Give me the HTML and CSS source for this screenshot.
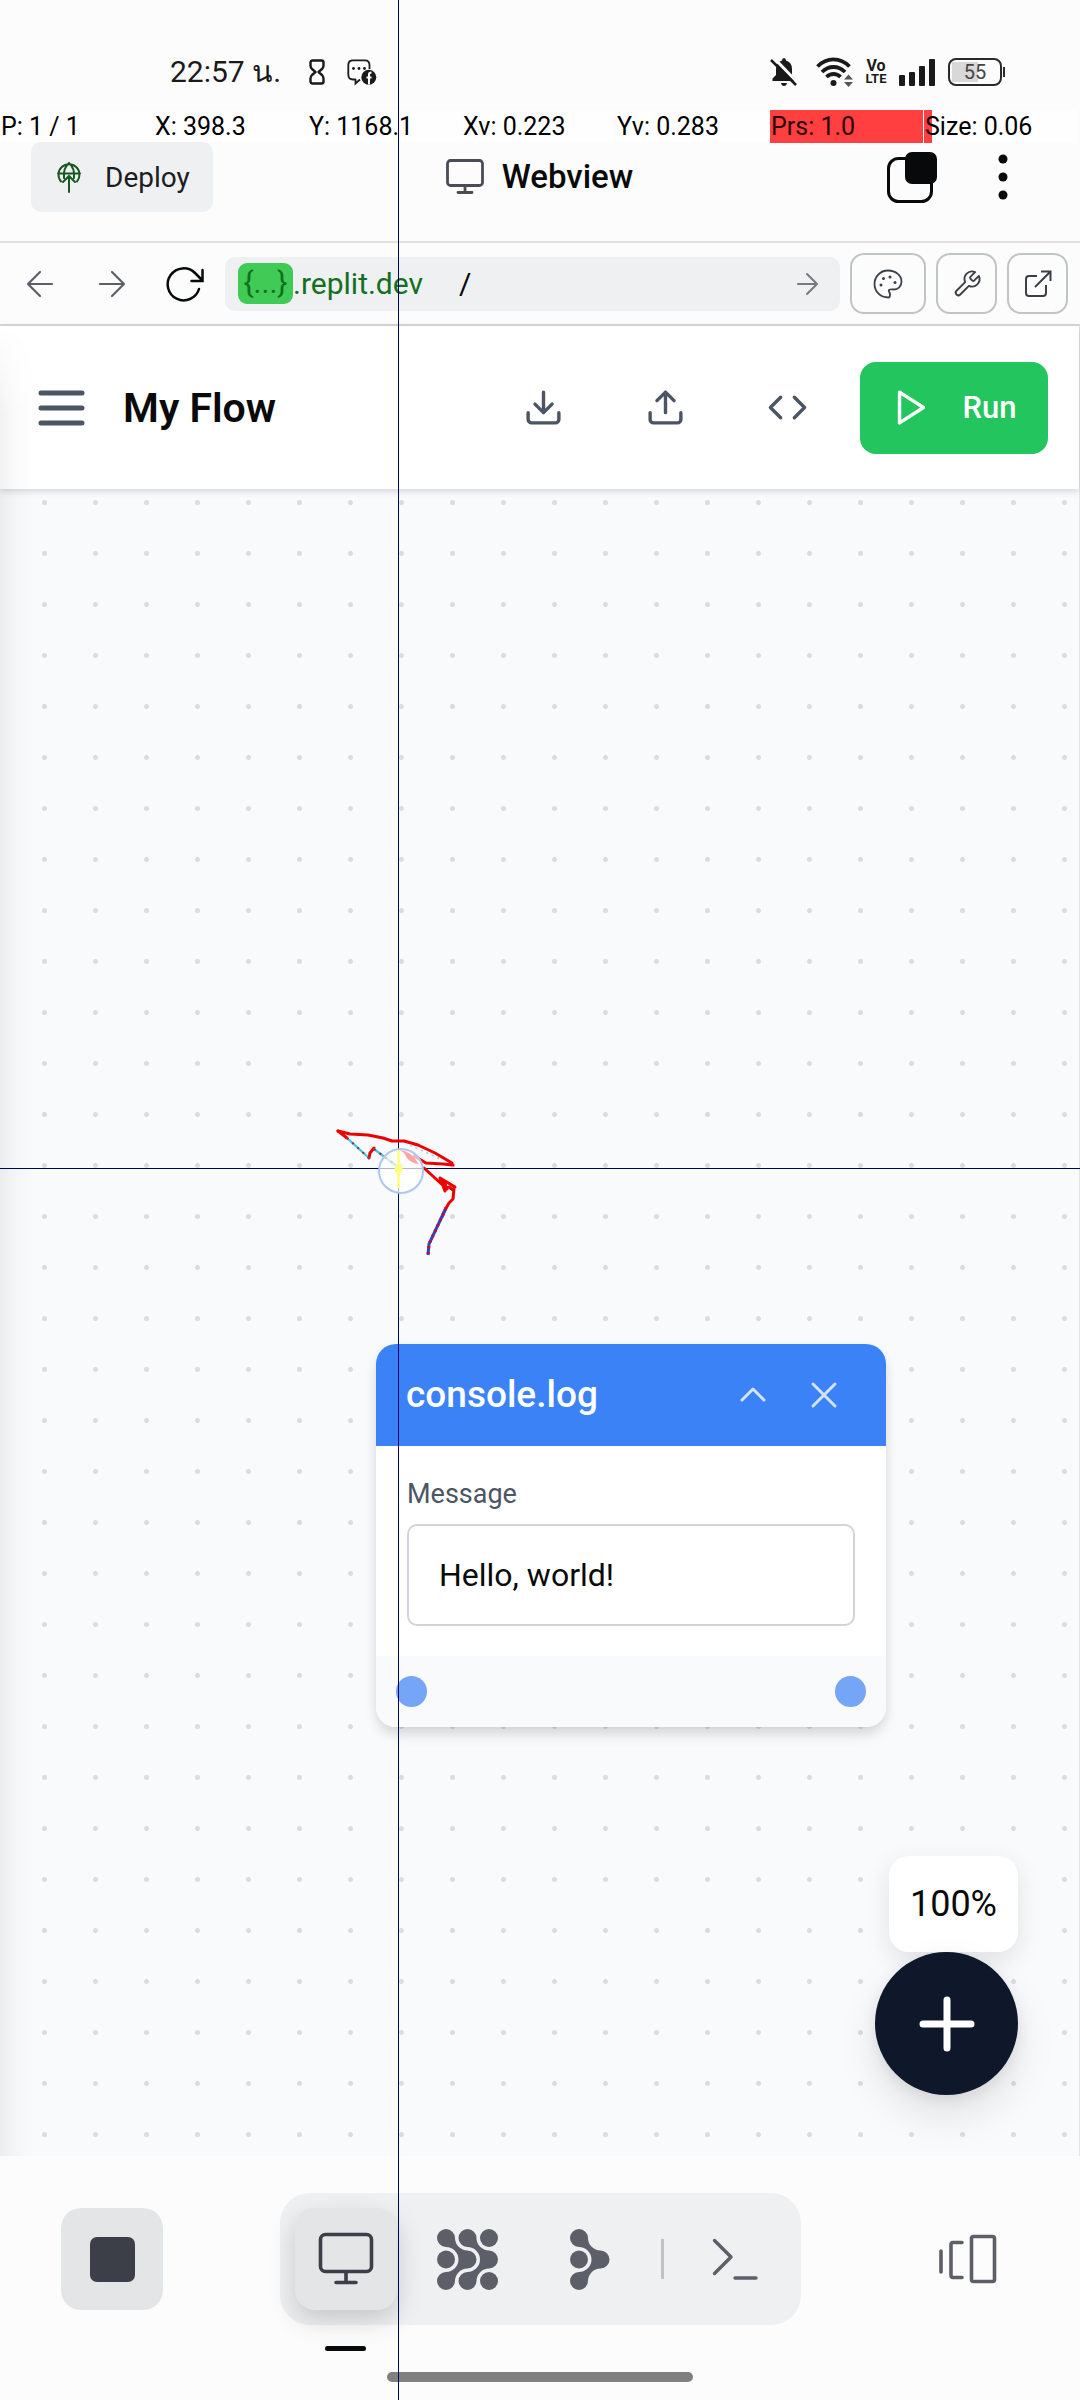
FILE: index.html
```html
<!DOCTYPE html>
<html lang="th">
<head>
<meta charset="utf-8">
<meta name="viewport" content="width=device-width, initial-scale=1">
<title>My Flow</title>
<link rel="stylesheet" href="styles.css">
</head>
<body>
<div class="screen">

  <div class="status">
    <span class="clock">22:57 น.</span>
    <svg class="hourglass" width="16" height="26" viewBox="0 0 16 26" fill="none" stroke="#1a1a1a" stroke-width="2.400" stroke-linejoin="round"><path d="M3.500 1.500h9q2 0 2 2v3q0 2-1.500 3.500L9.500 13l3.500 3q1.500 1.500 1.500 3.500v3q0 2-2 2h-9q-2 0-2-2v-3q0-2 1.500-3.500L6.500 13 3 10Q1.500 8.500 1.500 6.500v-3q0-2 2-2z"/></svg>
    <svg width="30" height="26" viewBox="0 0 30 26"><path d="M9 20.500H6Q1.300 20.500 1.300 16V6Q1.300 1.300 6 1.300H18Q22.500 1.300 22.500 6V10M13 20.500 8.500 24.500V20" fill="none" stroke="#1a1a1a" stroke-width="1.800"/><g fill="#1a1a1a"><circle cx="6.500" cy="9.500" r="1.400"/><circle cx="12" cy="9.500" r="1.400"/><circle cx="17.500" cy="9.500" r="1.400"/><circle cx="21.800" cy="18.300" r="7.500"/></g><path d="M22 25.500V15.500q0-2 2.500-2M19.500 18.500h5" fill="none" stroke="#fcfcfc" stroke-width="2"/></svg>
    <span class="grow"></span>
    <svg width="28" height="28" viewBox="0 0 28 28"><path d="M14 0q2 0 2 2.500 6 1.800 6 8.500v6l3.500 3.500V23H2.500v-2.500L6 17v-6q0-6.500 6-8.500Q12 0 14 0zM11 25h6q-.5 3-3 3t-3-3z" fill="#1a1a1a"/><path d="M3 -1 29 26" stroke="#fcfcfc" stroke-width="3"/><path d="M1 2 26 27" stroke="#1a1a1a" stroke-width="2.500"/></svg>
    <svg class="wifi" width="38" height="30" viewBox="0 0 38 30"><g fill="none" stroke="#1a1a1a" stroke-width="3.800"><path d="M1.500 9.500Q8.500 2.400 17.500 2.400t16 7.100"/><path d="M6 15q5-5 11.500-5T29 15"/><path d="M10.500 20q3-3 7-3t7 3"/></g><circle cx="17.500" cy="26" r="3" fill="#1a1a1a"/><path d="M28 22.500l4.500-5 4.500 5zM28 25h9l-4.500 5z" fill="#555"/></svg>
    <span class="volte"><span>Vo</span><span>LTE</span></span>
    <svg class="signal" width="38" height="27" viewBox="0 0 38 27" fill="#1a1a1a"><rect x="1" y="16" width="6" height="11" rx="1"/><rect x="11" y="13" width="6" height="14" rx="1"/><rect x="21" y="7" width="6" height="20" rx="1"/><rect x="31" y="0" width="6" height="27" rx="1"/></svg>
    <span class="battery">55</span>
  </div>

  <div class="pointer-data">
    <span>P: 1 / 1</span><span>X: 398.3</span><span>Y: 1168.1</span><span>Xv: 0.223</span><span>Yv: 0.283</span><span class="full">Prs: 1.0</span><span class="part">Size: 0.06</span>
  </div>

  <header class="tabbar">
    <button class="deploy">
      <svg width="24" height="32" viewBox="0 0 24 32" fill="none" stroke="#17591f" stroke-width="2" stroke-linecap="round"><path d="M4 20.500A10.500 10.500 0 1 1 20 20.500M1 12.500h22M7 17Q6 7 12 2q6 5 5 15M12 31V16M6 21l6-6 6 6"/></svg>
      Deploy
    </button>
    <div class="tab-title">
      <svg width="38" height="36" viewBox="0 0 38 36" fill="none" stroke="#4b4d56" stroke-width="2.800" stroke-linecap="round"><rect x="1.500" y="1.500" width="35" height="25" rx="3"/><path d="M19 27v6M12 33.500h14"/></svg>
      Webview
    </div>
    <div class="tab-actions">
      <button class="plain" aria-label="Tabs"><svg width="52" height="52" viewBox="0 0 52 52"><rect x="2.500" y="7.500" width="43" height="43" rx="10" fill="none" stroke="#07090b" stroke-width="3"/><rect x="19" y="1" width="32" height="32" rx="7" fill="#07090b"/></svg></button>
      <button class="plain" aria-label="More"><svg width="10" height="46" viewBox="0 0 10 46" fill="#07090b"><circle cx="5" cy="5" r="4.500"/><circle cx="5" cy="23" r="4.500"/><circle cx="5" cy="41" r="4.500"/></svg></button>
    </div>
  </header>

  <nav class="urlbar">
    <div class="history">
      <button class="plain" aria-label="Back"><svg width="28" height="28" viewBox="0 0 28 28" fill="none" stroke="#5d5f68" stroke-width="2.200" stroke-linecap="round" stroke-linejoin="round"><path d="M26 14H2M14 2 2 14l12 12"/></svg></button>
      <button class="plain" aria-label="Forward"><svg width="28" height="28" viewBox="0 0 28 28" fill="none" stroke="#5d5f68" stroke-width="2.200" stroke-linecap="round" stroke-linejoin="round"><path d="M2 14h24M14 2l12 12-12 12"/></svg></button>
      <button class="plain" aria-label="Reload"><svg width="38" height="36" viewBox="0 0 38 36" fill="none" stroke="#07090b" stroke-width="2.500" stroke-linecap="round"><path d="M33 23A16 16 0 1 1 29 7l7 7M36.500 4v11h-11"/></svg></button>
    </div>
    <div class="address">
      <span class="chip">{...}</span><span class="domain">.replit.dev</span><span class="path">/</span>
      <span class="grow"></span>
      <button class="plain" aria-label="Go"><svg width="22" height="22" viewBox="0 0 22 22" fill="none" stroke="#777980" stroke-width="2" stroke-linecap="round" stroke-linejoin="round"><path d="M2 11h18M11 1l10 10-10 10"/></svg></button>
    </div>
    <button class="tool wide" aria-label="Theme"><svg width="30" height="30" viewBox="0 0 30 30" fill="none" stroke="#3c3f48" stroke-width="1.800"><path d="M15.500 28.500C7 28.500 1.500 22 1.500 15S7 1.500 15 1.500 28.500 7 28.500 12.500c0 5-3.500 8-7.500 8-3 0-5-.5-5.200.8-.2 1.200 1.200 2.200 1.200 4.200 0 1.500-.5 3-1.500 3z"/><g fill="#3c3f48" stroke="none"><circle cx="8" cy="16" r="1.500"/><circle cx="10.500" cy="9.500" r="1.500"/><circle cx="17" cy="8" r="1.500"/><circle cx="22" cy="13.500" r="1.500"/></g></svg></button>
    <button class="tool" aria-label="Developer tools"><svg width="30" height="30" viewBox="0 0 24 24" fill="none" stroke="#3c3f48" stroke-width="1.500" stroke-linejoin="round"><path d="M14.700 6.300a1 1 0 0 0 0 1.400l1.600 1.600a1 1 0 0 0 1.400 0l3.770-3.770a6 6 0 0 1-7.940 7.940l-6.910 6.910a2.120 2.120 0 0 1-3-3l6.910-6.910a6 6 0 0 1 7.940-7.940l-3.760 3.760z"/></svg></button>
    <button class="tool" aria-label="Open in new tab"><svg width="28" height="28" viewBox="0 0 28 28" fill="none" stroke="#3c3f48" stroke-width="2"><path d="M13 6H5Q2 6 2 9v14q0 3 3 3h14q3 0 3-3v-8M11 17 26 2M17 1.500h9.500V11"/></svg></button>
  </nav>

  <main class="webview">
    <div class="appbar">
      <button class="plain" aria-label="Menu"><svg width="48" height="38" viewBox="0 0 48 38" stroke="#4b5563" stroke-width="5" stroke-linecap="round"><path d="M4 4h41M4 19h41M4 34h41"/></svg></button>
      <h1>My Flow</h1>
      <button class="icon-button" aria-label="Import"><svg width="41" height="41" viewBox="0 0 24 24"><path d="M21 15v4a2 2 0 0 1-2 2H5a2 2 0 0 1-2-2v-4M7 10l5 5 5-5M12 15V3"/></svg></button>
      <button class="icon-button" aria-label="Export"><svg width="41" height="41" viewBox="0 0 24 24"><path d="M21 15v4a2 2 0 0 1-2 2H5a2 2 0 0 1-2-2v-4M17 8l-5-5-5 5M12 3v12"/></svg></button>
      <button class="icon-button" aria-label="Code"><svg width="41" height="41" viewBox="0 0 24 24"><path d="M16 18l6-6-6-6M8 6l-6 6 6 6"/></svg></button>
      <button class="run"><svg width="41" height="41" viewBox="0 0 24 24"><path d="M5 3l14 9-14 9z"/></svg>Run</button>
    </div>

    <div class="canvas">
      <section class="node">
        <header class="node-head">
          <h2>console.log</h2>
          <button class="plain" aria-label="Collapse"><svg width="26" height="26" viewBox="0 0 26 26"><path d="M2 18 13 7l11 11"/></svg></button>
          <button class="plain" aria-label="Remove"><svg width="26" height="26" viewBox="0 0 26 26"><path d="M2 2l22 22M24 2 2 24"/></svg></button>
        </header>
        <div class="node-body">
          <label for="message">Message</label>
          <input id="message" type="text" value="Hello, world!">
        </div>
        <footer class="node-ports"><span class="port"></span><span class="port"></span></footer>
      </section>
      <div class="corner">
        <span class="zoom">100%</span>
        <button class="add" aria-label="Add node"><svg width="56" height="56" viewBox="0 0 56 56" stroke="#fff" stroke-width="7" stroke-linecap="round"><path d="M28 4v48M4 28h48"/></svg></button>
      </div>
    </div>
  </main>

  <footer class="dock">
    <button class="dock-button filled" aria-label="Stop"><span class="stop"></span></button>
    <div class="switcher">
      <button class="dock-button filled active" aria-label="Webview"><svg width="56" height="54" viewBox="0 0 56 54" fill="none" stroke="#3c3f48" stroke-width="3.600" stroke-linecap="round"><rect x="2.500" y="2.500" width="51" height="37" rx="5"/><path d="M28 40v9M18 50.500h20"/></svg></button>
      <button class="dock-button" aria-label="Assistant"><svg width="61" height="61" viewBox="0 0 61 61" fill="#5d5f68"><path id="branch" d="M18 9A12.500 12.500 0 0 0 30.500 21.500A9 9 0 0 1 30.500 39.500A12.500 12.500 0 0 0 18 52A9 9 0 1 1 9 43A12.500 12.500 0 0 0 9 18A9 9 0 1 1 18 9z"/><use href="#branch" x="21.500"/><circle cx="9" cy="30.500" r="9"/><circle cx="52" cy="9" r="9"/><circle cx="52" cy="52" r="9"/></svg></button>
      <button class="dock-button" aria-label="Agent"><svg width="40" height="61" viewBox="0 0 40 61" fill="#5d5f68"><use href="#branch"/><circle cx="9" cy="30.500" r="9"/></svg></button>
      <span class="divider"></span>
      <button class="dock-button" aria-label="Shell"><svg width="46" height="42" viewBox="0 0 46 42" fill="none" stroke="#5d5f68" stroke-width="3.400" stroke-linecap="round" stroke-linejoin="round"><path d="M2.500 2.500 19 19 2.500 35.500M23 40h21"/></svg></button>
    </div>
    <button class="dock-button" aria-label="All tabs"><svg width="58" height="50" viewBox="0 0 58 50" fill="none" stroke="#5d5f68" stroke-width="3.600" stroke-linecap="round"><rect x="32.500" y="2.500" width="23" height="45" rx="2"/><path d="M23 8.500H14Q12 8.500 12 10.500V41Q12 43.500 14 43.500H23M2 17v21"/></svg></button>
  </footer>
  <div class="marker-row"><span class="marker"></span></div>
  <div class="home-row"><span class="home"></span></div>

  <div class="guide-v"></div>
  <div class="guide-h"></div>
  <svg class="trail" width="160" height="160" viewBox="0 0 160 160" fill="none">
    <g stroke="#ec0000" stroke-width="3" stroke-linejoin="round" stroke-linecap="round">
      <path d="M18 21 30 24l18 1 15 3 9 3 12 0 14 4 17 8 17 10"/><path d="M18 21l9 7M133 55l-10-1-17-1-12-7"/>
      <path d="M104 58 127 79M120 68l15 9M134 78l-1 11-4 4-4 7-3 7M120 68l5 13M124 71l3 8M129 77l4 3"/>
      <path d="M49 48l1-5 4-5"/>
    </g>
    <path d="M27 28 49 48M54 39 78 57" stroke="#38c8e8" stroke-width="2.200"/>
    <path d="M27 28 49 48M54 39 78 57" stroke="#b21c28" stroke-width="2" stroke-dasharray="2 5"/>
    <path d="M90 35 120 49" stroke="#b8c8c8" stroke-width="1.600" stroke-dasharray="2 4"/>
    <path d="M126 98 109 134l-1 11" stroke="#2b45c8" stroke-width="3"/>
    <path d="M126 98 109 134l-1 11" stroke="#e00014" stroke-width="3" stroke-dasharray="2 4"/>
    <circle cx="81" cy="61" r="22" fill="#fff" fill-opacity=".7" stroke="#afc6f2" stroke-width="2"/>
    <path d="M80 40q11 1 19 14-10 0-15-11" fill="#ffa4a4"/>
    <path d="M78.500 40v38" stroke="#ffff8c" stroke-width="3"/><circle cx="78.500" cy="59" r="4" fill="#ffff78"/>
  </svg>
</div>
</body>
</html>
```
FILE: styles.css
```css
* { box-sizing: border-box; }
body { margin: 0; background: #fcfcfc; color: #0a0a0a; font-family: Roboto, "Noto Sans", sans-serif; }
svg { display: block; flex: none; overflow: visible; }
button { border: 0; padding: 0; background: none; color: inherit; font: inherit; display: flex; align-items: center; justify-content: center; flex: none; }
h1, h2 { margin: 0; }
.grow { flex: 1; }
.screen { position: relative; min-height: 100vh; display: flex; flex-direction: column; overflow: hidden; }

.status { display: flex; align-items: center; height: 110px; padding: 34px 78px 0 170px; color: #1a1a1a; }
.clock { font-size: 30px; line-height: 36px; margin-right: 28px; }
.hourglass { margin-right: 22px; }
.wifi { margin-left: 18px; }
.volte { display: flex; flex-direction: column; align-items: center; width: 20px; margin: 0 12px; font: bold 16px/13px "Liberation Sans Narrow", Roboto, sans-serif; }
.volte span:last-child { font-size: 13px; }
.signal { margin-right: 12px; }
.battery { position: relative; width: 54px; height: 28px; border: 2px solid #2a2a2a; border-radius: 8px; text-align: center; font-size: 20px; line-height: 24px; color: #444; background: linear-gradient(90deg, #d8d8d8 26px, transparent 26px) 2px 2px / 46px 20px no-repeat; }
.battery::after { content: ""; position: absolute; right: -5px; top: 7px; width: 2px; height: 10px; background: #2a2a2a; }

.pointer-data { display: grid; grid-template-columns: repeat(7, 1fr); column-gap: 1px; height: 32px; padding-right: 3px; font-size: 25px; line-height: 33px; color: #000; }
.pointer-data span { padding-left: 1px; background: #fefefe; white-space: nowrap; }
.pointer-data .full { background: #ff3f40; color: #2a0505; }
.pointer-data .part { background: linear-gradient(90deg, #ff3f40 8px, #fefefe 8px); }

.tabbar { display: grid; grid-template-columns: 1fr auto 1fr; align-items: center; padding: 0 72px 32px 31px; height: 101px; border-bottom: 2px solid #e0e0e0; }
.deploy { justify-self: start; height: 70px; padding: 0 23px 0 26px; gap: 24px; border-radius: 10px; background: #eff0f2; font-size: 28px; color: #1b1d22; }
.tab-title { display: flex; align-items: center; gap: 18px; font-size: 33px; font-weight: 500; line-height: 40px; margin-left: 40px; }
.tab-actions { display: flex; justify-content: flex-end; align-items: center; gap: 60px; }

.urlbar { display: flex; align-items: center; gap: 10px; height: 83px; padding: 0 12px 0 26px; border-bottom: 2px solid #d8dada; }
.history { display: flex; align-items: center; gap: 44px; margin-right: 11px; }
.history button:last-child { margin-left: -4px; }
.address { flex: 1; display: flex; align-items: center; height: 54px; padding: 0 22px 0 13px; border-radius: 10px; background: #eff0f2; font-size: 30px; line-height: 40px; color: #127020; }
.chip { width: 55px; height: 41px; border-radius: 9px; background: #3fcb55; text-align: center; }
.path { margin-left: 36px; color: #07090b; }
.tool { width: 61px; height: 61px; border: 2px solid #c0c4c4; border-radius: 14px; }
.wide { width: 76px; }

.webview { position: relative; flex: 1; display: flex; flex-direction: column; border-right: 1px solid #e4e4e4; }
.webview::before { content: ""; position: absolute; z-index: 2; inset: 0 auto 0 0; width: 34px; pointer-events: none; background: linear-gradient(90deg, rgba(0,0,0,.05), rgba(0,0,0,.015) 50%, transparent); -webkit-mask-image: linear-gradient(transparent, #000 90px); mask-image: linear-gradient(transparent, #000 90px); }
.appbar { position: relative; z-index: 1; display: flex; align-items: center; height: 163px; padding: 0 31px 0 37px; background: #fff; box-shadow: 0 2px 7px rgba(0,0,0,.16); }
.appbar h1 { flex: 1; margin-left: 38px; font-size: 41px; line-height: 48px; font-weight: 600; }
.icon-button { width: 102px; height: 92px; margin-right: 20px; }
.icon-button svg, .run svg { fill: none; stroke: #4b5563; stroke-width: 2; stroke-linecap: round; stroke-linejoin: round; }
.run { width: 188px; height: 92px; gap: 30px; margin-left: 2px; border-radius: 16px; background: #22c55e; color: #fff; font-size: 31px; font-weight: 500; }
.run svg { stroke: #fff; }

.canvas { position: relative; flex: 1; border-radius: 0 0 0 8px; background: #f8fafc radial-gradient(circle at center, #dcdcdc 2px, transparent 3px) 19px -12px / 51px 51px; }
.node { position: absolute; left: 376px; top: 855px; width: 510px; border-radius: 20px; background: #fff; box-shadow: 0 10px 15px -3px rgba(0,0,0,.1), 0 4px 12px rgba(0,0,0,.08); overflow: hidden; }
.node-head { display: flex; align-items: center; gap: 45px; height: 102px; padding: 0 49px 0 30px; background: #3b82f6; color: #fff; }
.node-head h2 { flex: 1; font-size: 37px; line-height: 44px; font-weight: 500; }
.node-head svg { fill: none; stroke: #d3e3fd; stroke-width: 3; stroke-linecap: round; stroke-linejoin: round; }
.node-body { display: flex; flex-direction: column; gap: 11px; padding: 30px 31px; }
.node-body label { font-size: 27px; line-height: 37px; color: #4b5563; }
.node-body input { width: 100%; height: 102px; padding: 0 30px; border: 2px solid #d1d5db; border-radius: 10px; background: #fff; color: #0a0a0a; font: 32px/40px Roboto, sans-serif; }
.node-ports { display: flex; justify-content: space-between; align-items: center; height: 71px; padding: 0 20px; background: #f9fafb; }
.port { width: 31px; height: 31px; border-radius: 50%; background: #75a5f7; }
.corner { position: absolute; right: 61px; bottom: 61px; display: flex; flex-direction: column; align-items: flex-end; }
.zoom { padding: 24px 21px; border-radius: 20px; background: #fff; font-size: 36px; line-height: 48px; box-shadow: 0 8px 26px rgba(0,0,0,.1); }
.add { width: 143px; height: 143px; border-radius: 50%; background: #0f172a; box-shadow: 0 20px 40px rgba(0,0,0,.1), 0 4px 14px rgba(0,0,0,.08); position: relative; }

.dock { display: flex; align-items: center; justify-content: space-between; padding: 37px 61px 0; }
.dock-button { width: 102px; height: 102px; border-radius: 20px; }
.filled { background: #e4e5e6; }
.active { box-shadow: 0 10px 26px rgba(0,0,0,.17); }
.stop { width: 45px; height: 45px; border-radius: 7px; background: #3c3f48; }
.switcher { display: flex; align-items: center; gap: 20px; padding: 15px; border-radius: 30px; background: #eff0f2; }
.divider { width: 3px; height: 40px; background: #c0c2c4; }
.marker-row { padding: 21px 0 21px 325px; }
.marker { display: block; width: 41px; height: 5px; border-radius: 3px; background: #07090b; }
.home-row { display: flex; justify-content: center; padding-bottom: 18px; }
.home { width: 306px; height: 10px; border-radius: 5px; background: #808080; }

.guide-v { position: absolute; z-index: 5; left: 398px; top: 0; bottom: 0; width: 1px; background: #00006a; }
.guide-h { position: absolute; z-index: 5; left: 0; right: 0; top: 1168px; height: 1px; background: #00006a; }
.trail { position: absolute; z-index: 6; left: 320px; top: 1110px; }
```
